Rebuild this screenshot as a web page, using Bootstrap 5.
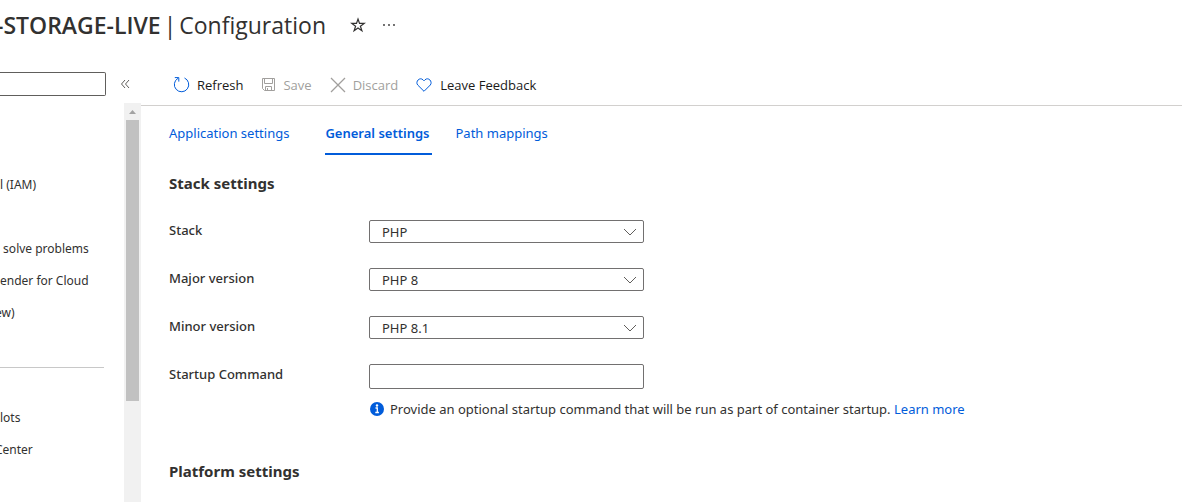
<!DOCTYPE html>
<html lang="en">
<head>
<meta charset="utf-8">
<meta name="viewport" content="width=device-width, initial-scale=1">
<title>Configuration</title>
<link href="https://cdn.jsdelivr.net/npm/bootstrap@5.3.0/dist/css/bootstrap.min.css" rel="stylesheet">
<style>
  body { font-family: "Noto Sans", "Open Sans", sans-serif; font-size: 13px; line-height: 20px; color: #323130; background: #fff; }
  a { color: #015cda; text-decoration: none; }
  .page-header { height: 64px; padding-bottom: 14px; font-family: "Open Sans", sans-serif; }
  .page-title { font-size: 23px; line-height: 32px; font-weight: 400; gap: 3px; }
  .page-title strong { font-weight: 600; text-indent: -4px; }
  .icon-btn { border: 0; background: none; padding: 0; color: inherit; line-height: 0; }
  .side { width: 141px; flex: none; }
  .side-search { height: 39px; padding-top: 8px; }
  .side-search input { width: 106px; height: 24px; border: 1px solid #605e5c; border-left: 0; border-radius: 0 2px 2px 0; }
  .side-search .icon-btn { margin-left: 14px; }
  .side-nav a { display: block; height: 32px; line-height: 32px; font-size: 12px; color: #323130; white-space: nowrap; }
  .side-nav a.cut { text-indent: -5px; }
  .side-nav { padding-top: 66px; }
  .side-nav hr { width: 104px; margin: 38px 0 34px; opacity: 1; border-top-color: #c8c8c8; }
  .gap-row { height: 32px; }
  .scroll-rail { width: 17px; background: #f1f1f1; }
  .scroll-rail .thumb { width: 13px; background: #c1c1c1; }
  .scroll-rail .arrow { height: 17px; }
  .toolbar { height: 42px; border-bottom: 1px solid #d2d0ce; padding-left: 32px; gap: 18px; font-family: "Open Sans", sans-serif; }
  .toolbar button { border: 0; background: none; padding: 0; color: #1b1a19; gap: 7px; }
  .toolbar button:disabled { color: #a19f9d; }
  .toolbar button:last-child { gap: 8px; }
  .settings { padding-left: 28px; }
  .tab-row { gap: 24px; padding-top: 12px; }
  .tab-row a { height: 37px; line-height: 30px; border-bottom: 2px solid transparent; }
  .tab-row a.active { font-weight: 600; border-color: #015cda; padding-right: 2px; }
  .tab-row a:first-child { padding-right: 12px; }
  .section-title { font-size: 15px; line-height: 24px; font-weight: 700; margin: 0; }
  .platform { margin-top: 40px; }
  .setting-list { padding-top: 25px; }
  .setting { height: 48px; }
  .setting.with-hint { height: 35px; }
  .setting label { width: 200px; flex: none; font-weight: 500; }
  .field { width: 275px; }
  .field select, .field input { display: block; height: 23px; width: 100%; border: 1px solid #727070; border-radius: 2px; background: #fff; color: #323130; }
  .field input { height: 25px; }
  .field select { appearance: none; padding: 0 12px; line-height: 20px; }
  .field svg { right: 7px; top: 8px; pointer-events: none; }
  .hint { padding-left: 201px; gap: 6px; }
</style>
</head>
<body>
<div class="d-flex flex-column min-vh-100 overflow-hidden">
  <header class="page-header d-flex align-items-center">
    <h1 class="page-title d-flex m-0 text-nowrap"><strong>-STORAGE-LIVE</strong> <span>|</span> <span>Configuration</span></h1>
    <button class="icon-btn ms-4" aria-label="Pin to favorites">
      <svg width="16" height="16" viewBox="0 0 16 16" fill="none" stroke="currentColor" stroke-width="1.200"><path d="M8 2l1.500 4.400h4.700l-3.800 2.800 1.500 4.500L8 11l-3.900 2.700 1.500-4.500L1.800 6.400h4.700z"/></svg>
    </button>
    <button class="icon-btn ms-3" aria-label="More">
      <svg width="14" height="16" viewBox="0 0 14 16" fill="currentColor"><circle cx="2" cy="8" r=".9"/><circle cx="7" cy="8" r=".9"/><circle cx="12" cy="8" r=".9"/></svg>
    </button>
  </header>
  <div class="d-flex flex-grow-1">
    <aside class="side d-flex flex-column">
      <div class="side-search d-flex align-items-start">
        <input type="text" aria-label="Search">
        <button class="icon-btn align-self-start pt-1" aria-label="Collapse menu">
          <svg width="11" height="16" viewBox="0 0 11 16" fill="none" stroke="#605e5c"><path d="M5 4L1.500 8 5 12M9 4L5.500 8 9 12"/></svg>
        </button>
      </div>
      <div class="d-flex flex-grow-1 justify-content-between">
        <nav class="side-nav">
          <a href="#">l (IAM)</a>
          <div class="gap-row"></div>
          <a href="#">&nbsp;solve problems</a>
          <a href="#">ender for Cloud</a>
          <a href="#" class="cut">ew)</a>
          <hr>
          <a href="#">lots</a>
          <a href="#" class="cut">Center</a>
        </nav>
        <div class="scroll-rail d-flex flex-column align-items-center">
          <div class="arrow d-flex align-items-center"><svg width="7" height="4" viewBox="0 0 7 4"><path d="M0 4L3.500 0 7 4z" fill="#a3a3a3"/></svg></div>
          <div class="flex-grow-1"><div class="thumb" style="height: 73.600%"></div></div>
        </div>
      </div>
    </aside>
    <main class="flex-grow-1">
      <div class="toolbar d-flex align-items-center">
        <button class="d-flex align-items-center">
          <svg width="17" height="17" viewBox="0 0 17 17" fill="none" stroke="#015cda"><path d="M11.500 2a7.200 7.200 0 1 1-6.500.3M1.800 1.600h4v4"/></svg>Refresh</button>
        <button class="d-flex align-items-center" disabled>
          <svg width="15" height="15" viewBox="0 0 15 15" fill="none" stroke="#a19f9d"><path d="M1.500 1.500h12v12h-10l-2-2zM3.500 1.500v5h8v-5M4.500 13.500v-4h6v4M6.500 11v2.500"/></svg>Save</button>
        <button class="d-flex align-items-center" disabled>
          <svg width="16" height="16" viewBox="0 0 16 16" fill="none" stroke="#a19f9d" stroke-width="1.300"><path d="M1 1l14 14M15 1L1 15"/></svg>Discard</button>
        <button class="d-flex align-items-center">
          <svg width="16" height="16" viewBox="0 0 16 16" fill="none" stroke="#015cda"><path d="M8 14.300L1.700 8C-1 4.700 3.700-.4 7 2.800l1 1 1-1c3.300-3.200 8 1.900 5.300 5.200z"/></svg>Leave Feedback</button>
      </div>
      <div class="settings">
        <nav class="tab-row d-flex">
          <a href="#">Application settings</a>
          <a href="#" class="active">General settings</a>
          <a href="#">Path mappings</a>
        </nav>
        <h2 class="section-title mt-3">Stack settings</h2>
        <div class="setting-list">
          <div class="setting d-flex"><label for="stack">Stack</label>
            <div class="field position-relative"><select id="stack"><option>PHP</option></select><svg class="position-absolute" width="14" height="8" viewBox="0 0 14 8" fill="none" stroke="#605e5c"><path d="M1 1l6 6 6-6"/></svg></div></div>
          <div class="setting d-flex"><label for="major">Major version</label>
            <div class="field position-relative"><select id="major"><option>PHP 8</option></select><svg class="position-absolute" width="14" height="8" viewBox="0 0 14 8" fill="none" stroke="#605e5c"><path d="M1 1l6 6 6-6"/></svg></div></div>
          <div class="setting d-flex"><label for="minor">Minor version</label>
            <div class="field position-relative"><select id="minor"><option>PHP 8.1</option></select><svg class="position-absolute" width="14" height="8" viewBox="0 0 14 8" fill="none" stroke="#605e5c"><path d="M1 1l6 6 6-6"/></svg></div></div>
          <div class="setting with-hint d-flex"><label for="cmd">Startup Command</label>
            <div class="field"><input id="cmd" type="text"></div></div>
          <div class="hint d-flex align-items-center">
            <svg width="14" height="14" viewBox="0 0 14 14"><circle cx="7" cy="7" r="7" fill="#015cda"/><circle cx="7" cy="3.500" r="1.200" fill="#fff"/><path d="M5.500 6H7.300v4.500M5.300 10.500h3.600" fill="none" stroke="#fff" stroke-width="1.300"/></svg>
            <span>Provide an optional startup command that will be run as part of container startup. <a href="#">Learn more</a></span>
          </div>
        </div>
        <h2 class="section-title platform">Platform settings</h2>
      </div>
    </main>
  </div>
</div>
<script src="https://cdn.jsdelivr.net/npm/bootstrap@5.3.0/dist/js/bootstrap.bundle.min.js"></script>
</body>
</html>
